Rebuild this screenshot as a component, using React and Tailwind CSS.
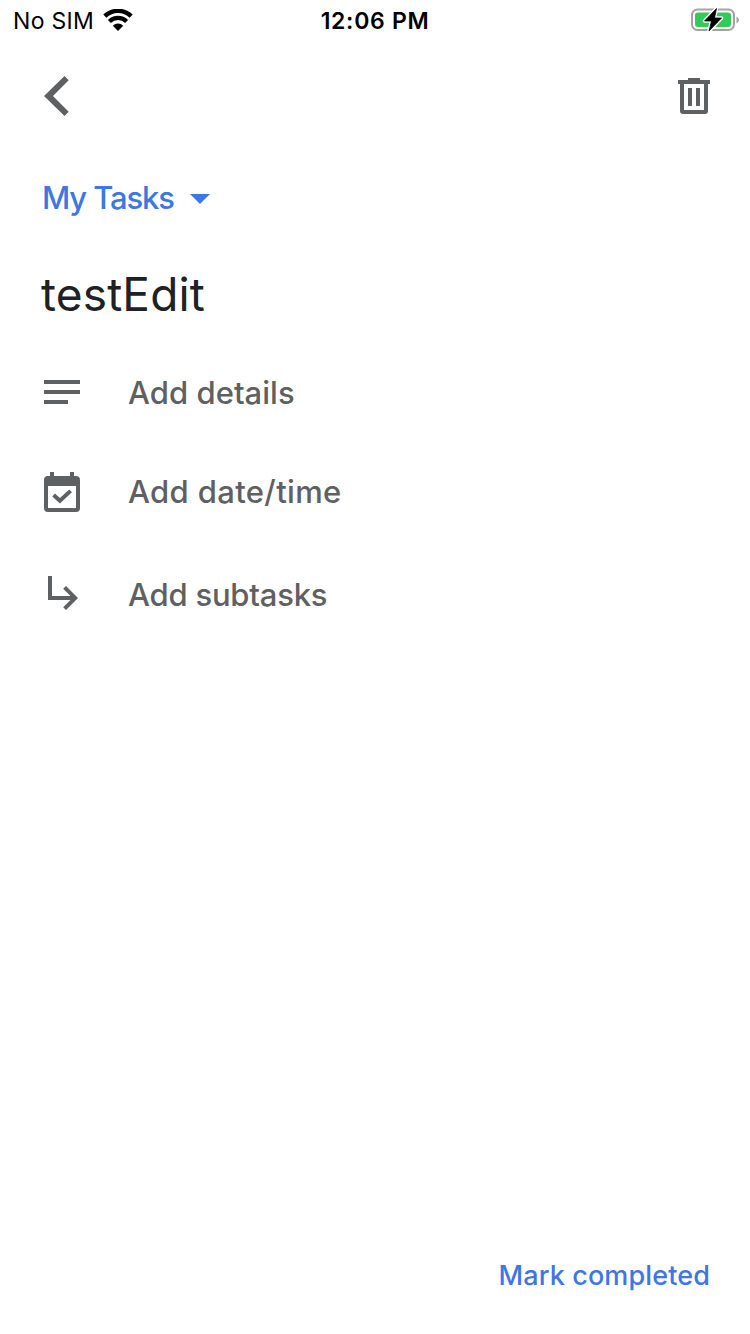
import React from "react";

function Wifi() {
  return (
    <svg className="ml-[9px] mb-px" width="30" height="22" viewBox="0 0 30 22" fill="none" stroke="#000">
      <path d="M1.8 7.2A19 19 0 0 1 28.2 7.2" strokeWidth="4.4" />
      <path d="M6.4 12.4A12.3 12.3 0 0 1 23.6 12.4" strokeWidth="4.2" />
      <path d="M15 22L9.8 16.8A7.3 7.3 0 0 1 20.2 16.8Z" fill="#000" stroke="none" />
    </svg>
  );
}

function Battery() {
  return (
    <svg width="50" height="26" viewBox="0 0 50 26" fill="none">
      <rect x="2" y="2.5" width="42" height="20.5" rx="5.5" stroke="#a3a3a5" strokeWidth="2" />
      <path d="M46.5 9.5Q49 10.5 49 13T46.5 16.5Z" fill="#a3a3a5" />
      <rect x="5" y="5.5" width="36" height="14.5" rx="3" fill="#33cb57" />
      <path d="M26.5 1.5L14.5 14H21.5L19 24L31.5 11H24.5Z" fill="#000" stroke="#fff" strokeWidth="3.5" strokeLinejoin="round" />
      <path d="M26.5 1.5L14.5 14H21.5L19 24L31.5 11H24.5Z" fill="#000" stroke="#000" strokeWidth="0.8" />
    </svg>
  );
}

function Row({ height, icon, children }) {
  return (
    <button className={`flex w-full items-center pl-11 text-left text-[31px] font-medium leading-none text-[#5f6062] ${height}`}>
      <span className="flex w-[84px] shrink-0">{icon}</span>
      {children}
    </button>
  );
}

export default function App() {
  return (
    <main className="flex h-[1334px] w-[750px] flex-col overflow-hidden bg-white font-['Inter',sans-serif]">
      <header className="grid h-10 shrink-0 grid-cols-3 items-center text-[23px] leading-none text-black">
        <div className="flex items-center pl-[13px] pt-px">
          <span className="pt-px tracking-[0.3px]">No SIM</span>
          <Wifi />
        </div>
        <span className="pt-0.5 text-center font-semibold tracking-[0.7px]">12:06 PM</span>
        <div className="flex justify-end pr-[10px]">
          <Battery />
        </div>
      </header>

      <nav className="flex h-28 shrink-0 items-center justify-between pl-11 pr-10">
        <button aria-label="Back">
          <svg width="25" height="40" viewBox="0 0 25 40" fill="#5f6062">
            <path d="M20.5 0L24.7 4.2L9 20L24.7 35.8L20.5 40L0 20Z" />
          </svg>
        </button>
        <button aria-label="Delete">
          <svg width="32" height="36" viewBox="0 0 32 36" fill="#5f6062">
            <path fillRule="evenodd" d="M10 0H22V2H32V6H30V33Q30 36 27 36H5Q2 36 2 33V6H0V2H10ZM6 6V32H26V6ZM10 10H14V28H10ZM18 10H22V28H18Z" />
          </svg>
        </button>
      </nav>

      <button className="flex h-[92px] shrink-0 items-center gap-4 pl-[42px] text-[31px] font-medium leading-none text-[#3d77e3]">
        <span className="pb-0.5 tracking-[-1.15px]">My Tasks</span>
        <svg className="mt-0.5" width="20" height="10" viewBox="0 0 20 10" fill="currentColor">
          <path d="M0 0H20L10 10Z" />
        </svg>
      </button>

      <h1 className="flex h-[100px] shrink-0 items-center pl-[41px] text-[46px] leading-none tracking-[0.15px] text-[#202124]">testEdit</h1>

      <Row
        height="h-[98px]"
        icon={
          <svg className="mb-0.5" width="36" height="24" viewBox="0 0 36 24" fill="currentColor">
            <path d="M0 0H36V4H0ZM0 10H36V14H0ZM0 20H24V24H0Z" />
          </svg>
        }
      >
        <span className="pb-0.5 tracking-[0.03px]">Add details</span>
      </Row>
      <Row
        height="h-[100px]"
        icon={
          <svg width="36" height="40" viewBox="0 0 36 40" fill="currentColor">
            <path fillRule="evenodd" d="M6 0H10V4H26V0H30V4H32Q36 4 36 8V36Q36 40 32 40H4Q0 40 0 36V8Q0 4 4 4H6ZM4 14V36H32V14Z" />
            <path d="M9.6 23L15.9 28.8L26.6 18.9" fill="none" stroke="currentColor" strokeWidth="4" />
          </svg>
        }
      >
        <span className="pb-0.5 tracking-[0.35px]">Add date/time</span>
      </Row>
      <Row
        height="h-[106px]"
        icon={
          <svg className="mb-1 ml-1" width="30" height="34" viewBox="0 0 30 34" fill="currentColor">
            <path d="M0 0H4V20H22.5L15.2 12.8L18 10L30 22L18 34L15.2 31.2L22.5 24H0Z" />
          </svg>
        }
      >
        <span className="pb-0.5 tracking-[-0.22px]">Add subtasks</span>
      </Row>

      <footer className="mt-auto flex h-[118px] shrink-0 items-center justify-end pr-10">
        <button className="text-[27px] font-medium leading-none tracking-[0.12px] text-[#3d77e3]">Mark completed</button>
      </footer>
    </main>
  );
}
